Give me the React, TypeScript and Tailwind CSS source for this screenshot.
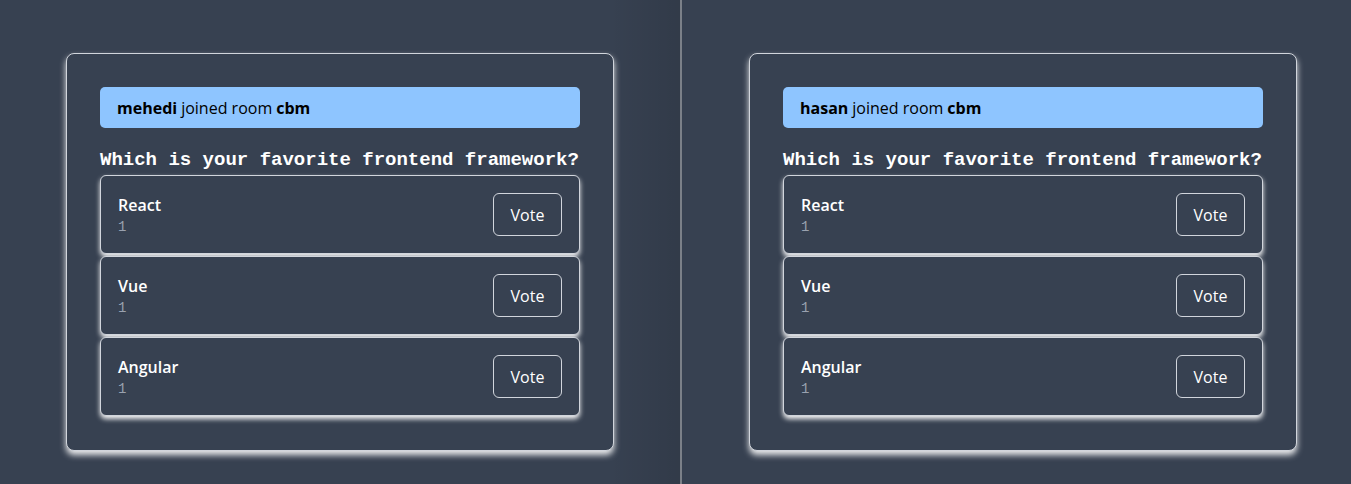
import React from "react";

type Option = { name: string; votes: number };

const options: Option[] = [
  { name: "React", votes: 1 },
  { name: "Vue", votes: 1 },
  { name: "Angular", votes: 1 },
];

const PollCard: React.FC<{ user: string; room: string }> = ({ user, room }) => {
  return (
    <div className="w-[548px] rounded-lg border border-gray-300 bg-[#374151] px-[33px] pt-[33px] pb-[34px] shadow-[0_4px_6px_rgba(255,255,255,0.9)]">
      {/* JOIN BANNER */}
      <div className="flex h-[41px] items-center rounded-[5px] bg-[#8ec5ff] px-[17px] text-[16px] text-black">
        <span className="font-bold">{user}</span>
        <span className="ml-[4px]">joined room</span>
        <span className="ml-[4px] font-bold">{room}</span>
      </div>

      <h2 className="mt-[20px] font-['Liberation_Mono',monospace] text-[19px] font-bold leading-[24px] text-white">
        Which is your favorite frontend framework?
      </h2>

      {/* OPTIONS */}
      <div className="mt-[3px] flex flex-col gap-[2px]">
        {options.map((o) => (
          <div
            key={o.name}
            className="flex h-[79px] items-center justify-between rounded-md border border-gray-300 bg-[#374151] px-[17px] shadow-[0_3px_5px_rgba(255,255,255,0.95)]"
          >
            <div className="flex flex-col pt-[2px]">
              <span className="text-[16px] font-semibold leading-[20px] text-white">{o.name}</span>
              <span className="mt-[3px] font-['Liberation_Mono',monospace] text-[14px] leading-[18px] text-gray-400">
                {o.votes}
              </span>
            </div>
            <button className="h-[43px] w-[69px] rounded-md border border-gray-300 text-[16px] text-white">
              Vote
            </button>
          </div>
        ))}
      </div>
    </div>
  );
};

export default function App() {
  return (
    <div className="flex h-[484px] w-[1351px] overflow-hidden bg-[#374151] font-['Open_Sans','Noto_Sans',sans-serif]">
      <div className="relative flex w-[680px] shrink-0 items-start justify-center pt-[53px]">
        <div className="pointer-events-none absolute inset-y-0 right-0 w-[70px] bg-gradient-to-r from-transparent to-black/10" />
        <PollCard user="mehedi" room="cbm" />
      </div>
      <div className="w-[2px] shrink-0 bg-[#7b8088]" />
      <div className="flex w-[682px] shrink-0 items-start justify-center pt-[53px]">
        <PollCard user="hasan" room="cbm" />
      </div>
    </div>
  );
}
